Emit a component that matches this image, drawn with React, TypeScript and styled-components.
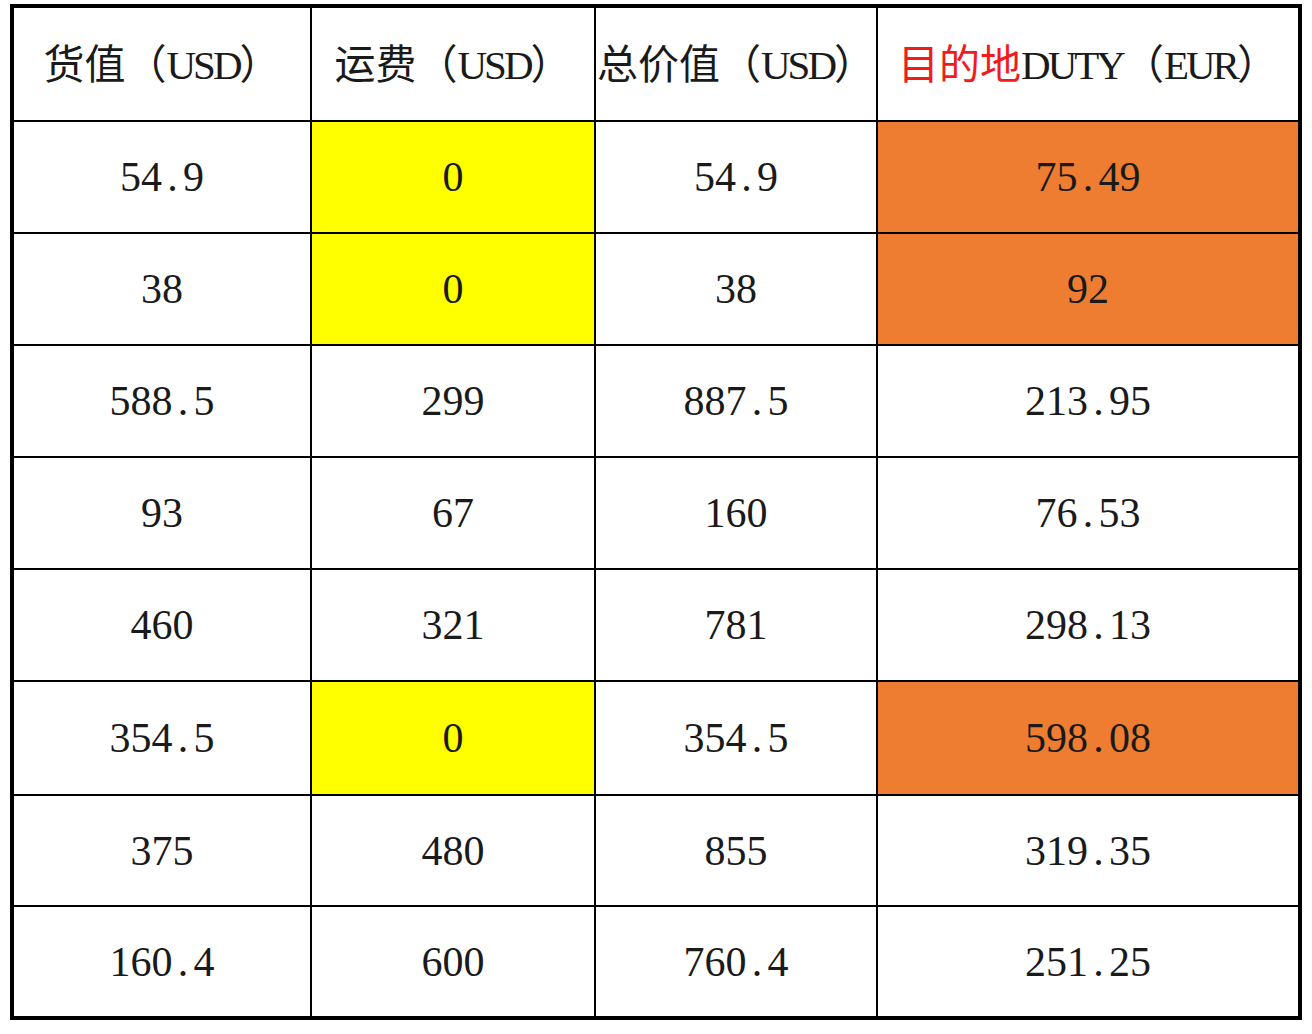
import { createGlobalStyle } from "styled-components";
import styled from "styled-components";

const GlobalStyle = createGlobalStyle`
    html, body {
        margin: 0;
        padding: 0;
        background: #ffffff;
    }
`;

const Page = styled.div`
    padding: 4px 0 0 10px;
    background: #ffffff;
`;

// the black grid background shows through the gaps as the cell lines
const Sheet = styled.div`
    display: grid;
    width: 1292px;
    box-sizing: border-box;
    grid-template-columns: 296px 282px 280px 420px;
    grid-template-rows: 112px repeat(5, 110px) 112px 109px 109px;
    gap: 2px;
    border: 4px solid #000000;
    background: #000000;
    font-family: "Liberation Serif", "Noto Sans CJK SC", serif;
    color: #1a1a1a;
`;

type Fill = "none" | "yellow" | "orange";

const fills: Record<Fill, string> = {
    none: "#ffffff",
    yellow: "#ffff00",
    orange: "#ee7d31",
};

const Cell = styled.div<{ $fill?: Fill }>`
    display: flex;
    align-items: center;
    justify-content: center;
    background: ${(p) => fills[p.$fill || "none"]};
    font-size: 42px;
    line-height: 1;
    white-space: nowrap;
    overflow: hidden;
`;

const HeadCell = styled(Cell)`
    font-size: 41px;
    padding-top: 2px;
`;

const Latin = styled.span`
    letter-spacing: -3px;
`;

const Red = styled.span`
    color: #f01c1c;
`;

const Dot = styled.span`
    display: inline-block;
    width: 0.5em;
    text-align: center;
`;

function Num({ value }: { value: string }) {
    const parts = value.split(".");
    if (parts.length < 2) return <span>{value}</span>;
    return (
        <span>
            {parts[0]}
            <Dot>.</Dot>
            {parts[1]}
        </span>
    );
}

const rows: { goods: string; freight: string; total: string; duty: string; free?: boolean }[] = [
    { goods: "54.9", freight: "0", total: "54.9", duty: "75.49", free: true },
    { goods: "38", freight: "0", total: "38", duty: "92", free: true },
    { goods: "588.5", freight: "299", total: "887.5", duty: "213.95" },
    { goods: "93", freight: "67", total: "160", duty: "76.53" },
    { goods: "460", freight: "321", total: "781", duty: "298.13" },
    { goods: "354.5", freight: "0", total: "354.5", duty: "598.08", free: true },
    { goods: "375", freight: "480", total: "855", duty: "319.35" },
    { goods: "160.4", freight: "600", total: "760.4", duty: "251.25" },
];

export default function App() {
    return (
        <>
            <GlobalStyle />
            <Page>
                <Sheet>
                    <HeadCell>货值（<Latin>USD</Latin>）</HeadCell>
                    <HeadCell>运费（<Latin>USD</Latin>）</HeadCell>
                    <HeadCell>总价值（<Latin>USD</Latin>）</HeadCell>
                    <HeadCell>
                        <Red>目的地</Red><Latin>DUTY</Latin>（<Latin>EUR</Latin>）
                    </HeadCell>

                    {rows.map((r, i) => [
                        <Cell key={`g${i}`}><Num value={r.goods} /></Cell>,
                        <Cell key={`f${i}`} $fill={r.free ? "yellow" : "none"}><Num value={r.freight} /></Cell>,
                        <Cell key={`t${i}`}><Num value={r.total} /></Cell>,
                        <Cell key={`d${i}`} $fill={r.free ? "orange" : "none"}><Num value={r.duty} /></Cell>,
                    ])}
                </Sheet>
            </Page>
        </>
    );
}
